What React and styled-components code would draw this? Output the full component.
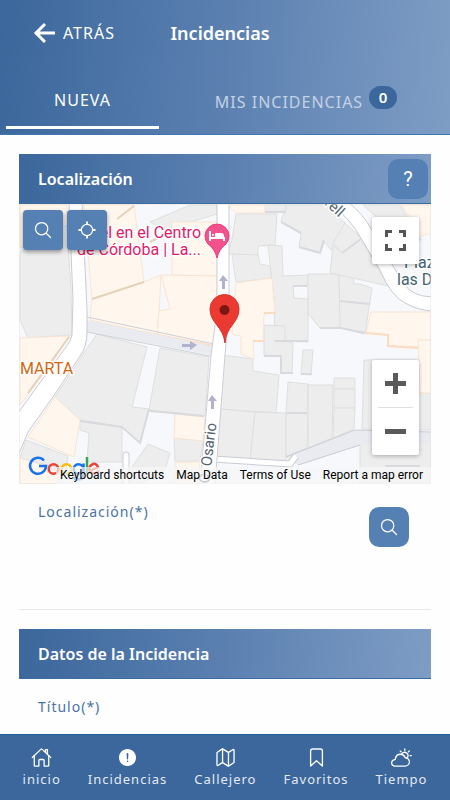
import React from "react";
import styled, { createGlobalStyle } from "styled-components";
import {
  IoAlertCircle,
  IoBookmarkOutline,
  IoHomeOutline,
  IoLocateOutline,
  IoMapOutline,
  IoPartlySunnyOutline,
  IoSearchOutline,
} from "react-icons/io5";

const GlobalStyle = createGlobalStyle`
  * {
    box-sizing: border-box;
  }

  body {
    margin: 0;
    background: #fefefe;
    font-family: "Noto Sans", sans-serif;
  }

  button, input {
    font-family: inherit;
    border: 0;
    padding: 0;
  }

  button {
    cursor: pointer;
  }
`;

const gradient = "linear-gradient(95deg, #3b679c, #5b80b0 50%, #7e9dc5)";

const Page = styled.div`
  display: flex;
  flex-direction: column;
  height: 100vh;
`;

const Header = styled.header`
  background: ${gradient};
  border-bottom: 1px solid #3f76b0;
  color: #fff;
`;

const Toolbar = styled.div`
  display: grid;
  grid-template-columns: 1fr auto 1fr;
  align-items: center;
  height: 66px;
  padding: 0 43px 0 33px;
`;

const BackButton = styled.button`
  display: flex;
  align-items: center;
  gap: 8px;
  background: none;
  color: #fff;
  font-size: 16px;
  letter-spacing: 1px;
`;

const Title = styled.h1`
  margin: 0;
  font-size: 18px;
  font-weight: 600;
  line-height: 24px;
`;

const Tabs = styled.nav`
  display: flex;
  height: 68px;
  padding: 0 0 0 6px;
`;

const Tab = styled.button`
  display: flex;
  align-items: center;
  justify-content: center;
  gap: 6px;
  flex: ${(props) => (props.$active ? "0 0 153px" : "1")};
  margin-bottom: 5px;
  padding: ${(props) => (props.$active ? "7px 0 0" : "11px 0 0 3px")};
  background: none;
  border-bottom: 3px solid ${(props) => (props.$active ? "#fff" : "transparent")};
  color: ${(props) => (props.$active ? "#fff" : "#c3d2e5")};
  font-size: 16px;
  letter-spacing: 1px;
`;

const Badge = styled.span`
  align-self: flex-start;
  margin-top: 9px;
  width: 28px;
  border-radius: 12px;
  background: #3b679c;
  color: #fff;
  font-size: 15px;
  font-weight: 600;
  line-height: 23px;
  letter-spacing: 0;
`;

const Content = styled.main`
  flex: 1;
  min-height: 0;
  overflow-y: auto;
  scrollbar-width: none;
  padding: 19px 19px 0;
`;

const SectionHeader = styled.div`
  display: flex;
  align-items: center;
  justify-content: space-between;
  height: 50px;
  padding: 0 3px 0 19px;
  background: ${gradient};
  border-bottom: 1px solid #3c6b9f;
  color: #fff;

  & h2 {
    margin: 0;
    font-size: 16px;
    font-weight: 600;
  }
`;

const SquareButton = styled.button`
  display: flex;
  align-items: center;
  justify-content: center;
  flex: none;
  width: 40px;
  height: 40px;
  border-radius: ${(props) => (props.$raised ? "4px" : "10px")};
  box-shadow: ${(props) => (props.$raised ? "0 2px 4px rgba(0, 0, 0, 0.4)" : "none")};
  background: #5580b3;
  color: #fff;
  font-family: Roboto, sans-serif;
  font-size: 20px;
`;

const MapBox = styled.div`
  position: relative;
  height: 280px;
  overflow: hidden;

  & > svg {
    display: block;
    width: 100%;
    height: 100%;
  }
`;

const MapTools = styled.div`
  position: absolute;
  top: 6px;
  left: 4px;
  display: flex;
  gap: 4px;
`;

const MapControl = styled.div`
  position: absolute;
  right: 12px;
  top: ${(props) => props.$top};
  display: flex;
  flex-direction: column;
  align-items: center;
  border-radius: 2px;
  background: #fff;
  box-shadow: 0 1px 4px rgba(0, 0, 0, 0.3);
`;

const ControlButton = styled.button`
  display: flex;
  align-items: center;
  justify-content: center;
  width: 47px;
  height: 47px;
  background: none;
`;

const ControlLine = styled.div`
  width: 35px;
  height: 1px;
  background: #e0e0e0;
`;

const Attribution = styled.div`
  position: absolute;
  right: 0;
  bottom: 0;
  display: flex;
  gap: 12px;
  padding: 0 8px 0 4px;
  background: rgba(247, 247, 247, 0.7);
  font-family: Roboto, sans-serif;
  font-size: 12px;
  line-height: 17px;
  white-space: nowrap;

  & a {
    color: #000;
    text-decoration: none;
  }
`;

const Field = styled.div`
  display: flex;
  justify-content: space-between;
  height: 126px;
  padding: 18px 22px 0 19px;
  border-bottom: 1px solid #e8e8e8;

  & > button {
    margin-top: 5px;
  }
`;

const FieldText = styled.div`
  flex: 1;
  display: flex;
  flex-direction: column;

  & label {
    color: #4a72a6;
    font-size: 14px;
    line-height: 20px;
    letter-spacing: 1px;
  }

  & input {
    height: 56px;
    width: 100%;
    background: transparent;
    color: #333;
    font-size: 14px;
    outline: none;
  }
`;

const Section = styled.section`
  margin-top: ${(props) => (props.$spaced ? "19px" : "0")};
`;

const Footer = styled.footer`
  display: flex;
  justify-content: center;
  gap: 27px;
  height: 66px;
  padding-top: 12px;
  background: #3b679c;
  border-top: 1px solid #1e5b97;
`;

const FooterLink = styled.a`
  display: flex;
  flex-direction: column;
  align-items: center;
  gap: 1px;
  color: #e3eaf3;
  font-size: 13px;
  line-height: 20px;
  letter-spacing: 1px;
  text-decoration: none;

  & svg {
    width: 21px;
    height: 21px;
    color: #fff;
  }
`;

const grayBlocks = [
  "20,252 67,225 71,290 72,335 28,338 20,320",
  "150,222 190,205 217,205 217,214 165,230",
  "97,334 147,347 132,407 149,409 140,443 122,427 80,420 55,397 88,347",
  "160,348 209,357 205,416 149,410",
  "80,421 122,427 122,462 87,462 89,433 80,430",
  "26,440 68,456 66,470 20,458",
  "148,444 170,453 165,470 140,484 120,484",
  "174,438 203,441 200,461 175,461",
  "236,214 277,214 275,245 258,246 258,255 227,254 232,240",
  "232,254 258,255 260,264 270,266 272,278 236,282",
  "268,245 282,246 283,276 308,275 308,285 293,286 294,298 308,299 308,342 275,341 274,299",
  "308,274 339,274 341,328 320,328 308,314",
  "339,275 353,277 354,284 360,284 372,288 365,334 340,328",
  "287,205 325,205 345,223 331,250 323,240 320,252 299,247 301,233 281,221",
  "345,223 362,239 342,253 333,243",
  "342,253 361,239 388,286 353,278 330,273 333,245",
  "264,325 285,326 285,341 293,343 292,373 281,373 281,356 264,355",
  "303,350 313,350 311,375 301,374",
  "222,355 253,359 253,371 279,375 276,413 220,409",
  "220,409 255,412 250,461 216,458",
  "255,412 286,413 286,464 250,461",
  "288,382 308,384 307,414 286,413",
  "286,413 308,414 307,448 286,456",
  "308,385 333,385 332,438 308,448",
  "334,378 355,378 355,389 334,389",
  "334,389 355,389 355,408 334,408",
  "334,408 355,408 354,429 333,438",
  "364,360 419,360 419,393 431,393 431,430 362,429",
  "363,205 400,205 421,240 400,238",
  "360,440 431,440 431,484 360,484",
  "265,205 286,205 286,211 265,212",
];

const creamBlocks = [
  "20,205 67,205 67,222 20,248",
  "84,205 134,205 144,282 92,299",
  "172,222 217,222 217,276 172,275",
  "92,299 144,282 161,275 159,311 157,335 90,320",
  "161,275 217,276 215,346 157,335 159,311 170,309",
  "20,338 69,336 56,357 20,405",
  "55,397 80,420 74,457 28,437",
  "20,458 57,470 57,484 20,484",
  "175,414 205,417 203,441 174,438",
  "175,462 200,462 198,484 175,484",
  "228,205 265,205 265,213 236,213",
  "236,283 272,278 275,313 264,314 263,341 253,341 254,359 241,354 241,336 232,334",
  "371,312 431,312 431,347 388,346 388,335 366,333",
  "418,340 431,340 431,393 420,393",
  "402,205 431,205 431,233 421,236",
];

const CityMap = () => (
  <svg viewBox="19 204 412 280" preserveAspectRatio="xMidYMid slice" aria-hidden="true">
    <rect x="-400" y="0" width="1600" height="800" fill="#f6f8fb" />
    <g fill="#ededed" stroke="#dedfdf">
      {grayBlocks.map((points) => (
        <polygon key={points} points={points} />
      ))}
    </g>
    <g fill="#fff6ed" stroke="#fae5d2">
      {creamBlocks.map((points) => (
        <polygon key={points} points={points} />
      ))}
    </g>
    {/* darker sides of the buildings */}
    <g fill="none" strokeWidth="2">
      <path d="M92 299 144 282M117 219 134 206M150 242 158 238M28 393 69 337" stroke="#e6d2b9" />
      <path d="M264 313h12M253 341h11M366 333l22 2v11l30 2M91 322l123 24" stroke="#fbdcc1" />
      <path
        d="M281 222l20 11M299 247l21 6 4-12M342 253l19-14M264 356h17v17h12M275 341h33M320 328h21l24 5M301 374h11M293 286h14M340 301l30 3M287 413h20M150 411l54 5M80 421l42 6 18 16 9-34M265 212h21M385 466h35"
        stroke="#d8dade"
      />
    </g>
    {/* streets */}
    <path d="M87 320 213 346 212 355 87 332z" fill="#e9ebf0" />
    <path d="M87 317 214 344M87 332l123 24" stroke="#ced1d8" fill="none" />
    <path d="M286 457 355 430 431 432 431 444 360 445 300 465 290 462z" fill="#e9ebf0" />
    <path d="M286 457 355 430 431 432M298 465 360 445" stroke="#c9ccd4" fill="none" />
    <path d="M213 459l77 5 6-8" stroke="#c9ccd4" strokeWidth="7" fill="none" />
    <path d="M213 459l77 5 6-8" stroke="#fff" strokeWidth="5" fill="none" />
    <path d="M126 484v-29" stroke="#cbced4" strokeWidth="7" strokeLinecap="round" />
    <path d="M126 484v-29" stroke="#fff" strokeWidth="5" strokeLinecap="round" />
    <path
      d="M69 203 73 300 72 335Q71 341 66 347L18 413V456L28 432 55 394 80 356Q87 347 87 332V310L82 203z"
      fill="#fff"
      stroke="#c9cbd4"
    />
    <path d="M217 203 217 310 211 356 200 485H215L225 355 229 310V203z" fill="#fff" stroke="#cdcfd8" />
    <path
      d="M330 203Q350 218 362 240L380 270Q391 297 407 304 418 310 432 311V297Q412 296 405 285L393 266 372 230Q363 214 349 203z"
      fill="#fff"
      stroke="#c9cbd4"
    />
    <g fill="#b3b2ce">
      <path d="M223 275l-4 6h3v8h3v-8h3z" />
      <path d="M212 395l-4 6h3v8h3v-8h3z" />
      <path d="M197 345l-7-4v3h-8v3h8v3z" />
    </g>
    <g fontFamily="Roboto, sans-serif" stroke="#fff" strokeWidth="3" strokeLinejoin="round" paintOrder="stroke">
      <g fontSize="16" fill="#e31a68" textAnchor="end">
        <text x="201" y="238">Hotel en el Centro</text>
        <text x="201" y="255">de Córdoba | La...</text>
      </g>
      <text x="20" y="374" fontSize="16" fill="#d2660f">MARTA</text>
      <g fontSize="16" fill="#3f6370">
        <text x="404" y="268">Plaza</text>
        <text x="397" y="285">las Doblas</text>
      </g>
      <g fontSize="15" fill="#51616f">
        <text transform="translate(209 484) rotate(-83)">C. Osario</text>
        <text transform="translate(295 178) rotate(42)">C. Morell</text>
      </g>
    </g>
    {/* hotel pin */}
    <path d="M217 258Q215 249 208 244A12 12 0 1 1 226 244Q219 249 217 258z" fill="#f4528c" stroke="#e83e7b" />
    <path d="M210 231v10M210 238h14v3" stroke="#fff" strokeWidth="2" fill="none" />
    <path d="M215 233h6q3 0 3 3v2h-9z" fill="#fff" />
    <circle cx="213" cy="235" r="1" fill="#fff" />
    {/* selected place */}
    <path
      d="M225 343C223 326 210 323 210 309A14.500 14.500 0 0 1 239 309C239 323 226 326 225 343z"
      fill="#ea3a32"
      stroke="#dc3329"
    />
    <circle cx="224.500" cy="310" r="5" fill="#7c1612" />
    {/* map logo */}
    <g fill="none" strokeWidth="2.500">
      <path d="M44 460.500A8 8 0 1 0 46 466H39" stroke="#1a73e8" />
      <circle cx="53.500" cy="469" r="4.800" stroke="#ea4335" />
      <circle cx="66.500" cy="469" r="4.800" stroke="#fbbc04" />
      <path d="M83.500 463.500v11q0 5-5 5-4 0-5-3" stroke="#1a73e8" />
      <circle cx="78.500" cy="469" r="4.800" stroke="#1a73e8" />
      <path d="M87 457v17" stroke="#34a853" />
      <path d="M90 471l8-4q-2-4-5-3-5 2-3 7 4 5 9 0" stroke="#ea4335" />
    </g>
    <rect x="19" y="204" width="412" height="280" fill="none" stroke="#e4e4e4" />
  </svg>
);

const links = ["Keyboard shortcuts", "Map Data", "Terms of Use", "Report a map error"];

const footerItems = [
  { label: "inicio", Icon: IoHomeOutline },
  { label: "Incidencias", Icon: IoAlertCircle },
  { label: "Callejero", Icon: IoMapOutline },
  { label: "Favoritos", Icon: IoBookmarkOutline },
  { label: "Tiempo", Icon: IoPartlySunnyOutline },
];

const App = () => {
  return (
    <>
      <GlobalStyle />
      <Page>
        <Header>
          <Toolbar>
            <BackButton>
              <svg width="22" height="22" fill="none" stroke="#fff" strokeWidth="3">
                <path d="M12 2 3 11l9 9M3 11h19" />
              </svg>
              ATRÁS
            </BackButton>
            <Title>Incidencias</Title>
          </Toolbar>
          <Tabs>
            <Tab $active>NUEVA</Tab>
            <Tab>
              MIS INCIDENCIAS
              <Badge>0</Badge>
            </Tab>
          </Tabs>
        </Header>
        <Content>
          <Section>
            <SectionHeader>
              <h2>Localización</h2>
              <SquareButton aria-label="Ayuda">?</SquareButton>
            </SectionHeader>
            <MapBox>
              <CityMap />
              <MapTools>
                <SquareButton $raised aria-label="Buscar">
                  <IoSearchOutline />
                </SquareButton>
                <SquareButton $raised aria-label="Mi ubicación">
                  <IoLocateOutline />
                </SquareButton>
              </MapTools>
              <MapControl $top="13px">
                <ControlButton aria-label="Pantalla completa">
                  <svg width="21" height="21" fill="none" stroke="#555" strokeWidth="3">
                    <path d="M1.500 7V1.500H7M14 1.500h5.500V7M19.500 14v5.500H14M7 19.500H1.500V14" />
                  </svg>
                </ControlButton>
              </MapControl>
              <MapControl $top="156px">
                <ControlButton aria-label="Acercar">
                  <svg width="21" height="21" stroke="#5a5a5a" strokeWidth="5">
                    <path d="M0 10.500h21M10.500 0v21" />
                  </svg>
                </ControlButton>
                <ControlLine />
                <ControlButton aria-label="Alejar">
                  <svg width="21" height="21" stroke="#5a5a5a" strokeWidth="5">
                    <path d="M0 10.500h21" />
                  </svg>
                </ControlButton>
              </MapControl>
              <Attribution>
                {links.map((text) => (
                  <a key={text} href="#map">
                    {text}
                  </a>
                ))}
              </Attribution>
            </MapBox>
            <Field>
              <FieldText>
                <label htmlFor="place">Localización(*)</label>
                <input id="place" />
              </FieldText>
              <SquareButton aria-label="Buscar localización">
                <IoSearchOutline />
              </SquareButton>
            </Field>
          </Section>
          <Section $spaced>
            <SectionHeader>
              <h2>Datos de la Incidencia</h2>
            </SectionHeader>
            <Field>
              <FieldText>
                <label htmlFor="subject">Título(*)</label>
                <input id="subject" />
              </FieldText>
            </Field>
          </Section>
        </Content>
        <Footer>
          {footerItems.map(({ label, Icon }) => (
            <FooterLink key={label} href={`#${label}`}>
              <Icon />
              {label}
            </FooterLink>
          ))}
        </Footer>
      </Page>
    </>
  );
};

export default App;
